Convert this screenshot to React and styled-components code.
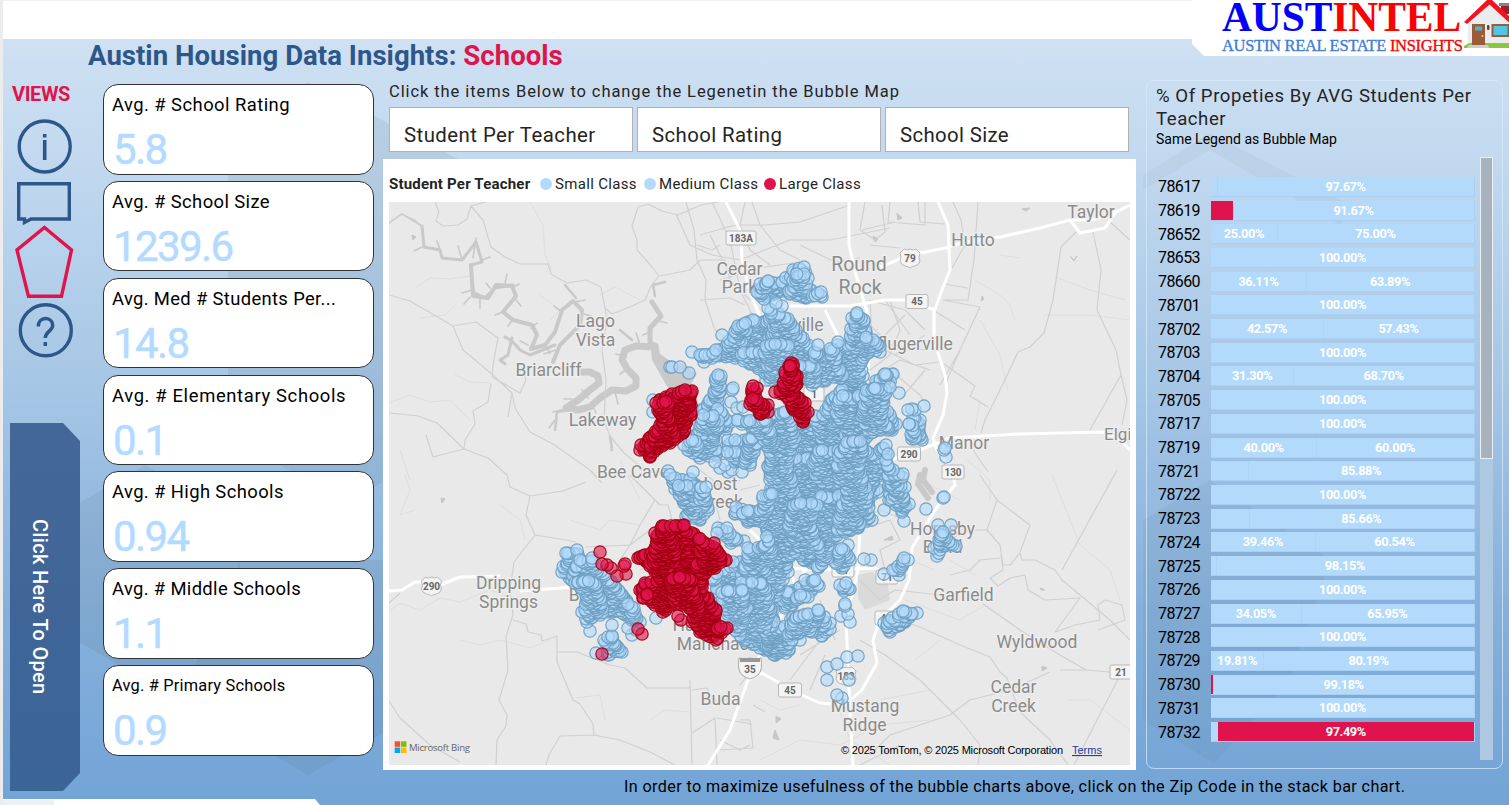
import React from "react";
import styled, { createGlobalStyle } from "styled-components";

const Global = createGlobalStyle`
  body { margin: 0; overflow: hidden; background: #eeeeee; }
  * { box-sizing: border-box; }
`;

const navy = "#2d5689";
const crimson = "#e0144c";
const sky = "#b3daff";

const Page = styled.div`
  position: relative;
  width: 1509px;
  height: 805px;
  padding-left: 3px;
  overflow: hidden;
  background: linear-gradient(180deg, #cfe1f3 39px, #bfd7ee 180px, #a4c5e5 400px, #86b0db 610px, #72a4d6 805px);
  font-family: Roboto, "Liberation Sans", sans-serif;
  display: flex;
  flex-direction: column;
  box-shadow: inset 3px 0 0 #ececec;
`;

const Backdrop = styled.svg`
  position: absolute;
  left: 0;
  top: 0;
`;

const TopBar = styled.div`
  position: relative;
  height: 39px;
  flex: none;
  background: #fff;
  border-top: 1px solid #f0f0f0;
`;

const Title = styled.h1`
  position: relative;
  margin: 0;
  height: 41px;
  flex: none;
  padding-left: 85px;
  line-height: 33px;
  font-size: 27.5px;
  font-weight: 700;
  letter-spacing: ${(p) => p.$ls}px;
  color: ${navy};
  white-space: nowrap;
`;

const Accent = styled.span`
  color: ${crimson};
`;

const Brand = styled.div`
  position: absolute;
  right: 0;
  top: 0;
  width: 317px;
  height: 56px;
  display: flex;
  background: #fff;
  clip-path: polygon(0 0, 100% 0, 100% 100%, 12px 100%, 0 44px);
  padding-left: 30px;
`;

const BrandText = styled.div`
  width: 242px;
  font-family: "Liberation Serif", serif;
  white-space: nowrap;
`;

const BrandName = styled.div`
  height: 36px;
  line-height: 35px;
  font-size: 41.5px;
  font-weight: 700;
  color: #0202fb;
  letter-spacing: ${(p) => p.$ls}px;
`;

const BrandTag = styled.div`
  line-height: 20px;
  font-size: 16.5px;
  color: #3f7dd8;
  letter-spacing: ${(p) => p.$ls}px;
  -webkit-text-stroke: 0.35px currentColor;
`;

const Red = styled.span`
  color: #fb0202;
`;

const Columns = styled.div`
  position: relative;
  display: flex;
  height: 690px;
  flex: none;
`;

const Nav = styled.nav`
  width: 100px;
  padding-left: 7px;
  display: flex;
  flex-direction: column;
  align-items: flex-start;
`;

const NavTitle = styled.div`
  height: 39px;
  flex: none;
  padding-left: 2px;
  line-height: 28px;
  font-size: 20px;
  font-weight: 700;
  letter-spacing: ${(p) => p.$ls}px;
  color: ${crimson};
`;

const NavIcons = styled.svg`
  display: block;
  flex: none;
`;

const OpenPanel = styled.button`
  border: 0;
  margin: 62px 0 0;
  width: 70px;
  height: 368px;
  flex: none;
  padding: 0 11px 0 0;
  display: flex;
  align-items: center;
  justify-content: center;
  background: linear-gradient(#446798, #3b6497);
  clip-path: polygon(0 0, 53px 0, 100% 18px, 100% 350px, 53px 100%, 0 100%);
  color: #fff;
  font: 500 20px Roboto, sans-serif;
  letter-spacing: ${(p) => p.$ls}px;
  writing-mode: vertical-rl;
`;

const Cards = styled.div`
  width: 271px;
  padding-top: 4px;
  display: flex;
  flex-direction: column;
  gap: 6.35px;
`;

const Card = styled.div`
  height: 90.5px;
  flex: none;
  padding: 8px 8px 0;
  border: 1.4px solid #333;
  border-radius: 15px;
  background: #fff;
`;

const CardTitle = styled.div`
  height: 24px;
  line-height: 24px;
  font-size: ${(p) => (p.$small ? 16.4 : 18.4)}px;
  letter-spacing: ${(p) => p.$ls}px;
  color: #000;
  white-space: nowrap;
`;

const CardValue = styled.div`
  padding-left: 1px;
  line-height: 66px;
  font-size: 42px;
  letter-spacing: -1.6px;
  color: ${sky};
  -webkit-text-stroke: 0.5px ${sky};
`;

const Middle = styled.main`
  width: 753px;
  margin-left: 9px;
  display: flex;
  flex-direction: column;
`;

const Hint = styled.div`
  height: 27px;
  padding-left: 6px;
  line-height: 23px;
  font-size: 16.5px;
  letter-spacing: ${(p) => p.$ls}px;
  color: #252423;
  white-space: nowrap;
`;

const Tabs = styled.div`
  height: 45px;
  padding: 0 7px 0 6px;
  display: grid;
  grid-template-columns: repeat(3, 1fr);
  gap: 4px;
`;

const Tab = styled.button`
  border: 1px solid #b3b0ad;
  background: #fff;
  padding: 10px 0 0 14px;
  text-align: left;
  font: 400 20.4px Roboto, sans-serif;
  letter-spacing: ${(p) => p.$ls}px;
  color: #252423;
`;

const MapCard = styled.section`
  margin-top: 7px;
  height: 611px;
  background: #fff;
  padding: 0 6px;
`;

const Legend = styled.div`
  height: 43px;
  padding-top: 7px;
  display: flex;
  align-items: center;
  font-size: 15px;
  letter-spacing: ${(p) => p.$ls}px;
  color: #252423;
  white-space: nowrap;
`;

const LegendTitle = styled.b`
  width: 151px;
  letter-spacing: 0.2px;
`;

const LegendItem = styled.span`
  width: ${(p) => p.$w}px;
  display: flex;
  align-items: center;
  gap: 3px;
  &::before {
    content: "";
    width: 12px;
    height: 12px;
    border-radius: 50%;
    background: ${(p) => p.$c};
  }
`;

const MapSvg = styled.svg`
  display: block;
`;

const Chart = styled.section`
  margin-left: 10px;
  width: 357px;
  height: 689px;
  border: 1.5px solid rgba(214, 233, 250, 0.75);
  border-radius: 8px;
  padding: 4px 8px 0 9px;
`;

const ChartTitle = styled.h2`
  margin: 0;
  font-size: 18.6px;
  font-weight: 400;
  line-height: 23px;
  letter-spacing: ${(p) => p.$ls}px;
  color: #252423;
  white-space: nowrap;
`;

const ChartSub = styled.div`
  line-height: 17px;
  height: 19px;
  font-size: 14px;
  letter-spacing: ${(p) => p.$ls}px;
  color: #000;
`;

const Plot = styled.div`
  margin-top: 7px;
  display: flex;
  justify-content: space-between;
`;

const Rows = styled.div`
  padding-top: 18px;
  width: 319px;
`;

const Row = styled.div`
  height: 23.71px;
  display: flex;
  align-items: center;
`;

const Zip = styled.div`
  width: 55px;
  padding-left: 2px;
  font-size: 16px;
  letter-spacing: -0.6px;
  color: #000;
`;

const Bar = styled.div`
  display: flex;
  width: 264px;
  height: 20px;
  border-right: 1px solid #a9d0f4;
  border-bottom: 1px solid #a9d0f4;
`;

const Segment = styled.div`
  flex: none;
  background: ${(p) => (p.$red ? crimson : "#b3dafb")};
  box-shadow: ${(p) => (p.$divided ? "inset 1px 0 0 #acd4f7" : "none")};
  color: #fff;
  font-size: 12.8px;
  font-weight: 700;
  letter-spacing: -0.4px;
  line-height: 20px;
  text-align: center;
  overflow: hidden;
`;

const Track = styled.div`
  margin-right: 1px;
  width: 13px;
  height: 603px;
  background: #afc8e2;
`;

const Thumb = styled.div`
  height: 302px;
  background: #a7b2bd;
  border: 1px solid #e8f1fa;
`;

const Footer = styled.div`
  position: relative;
  padding: 7px 0 0 621px;
  line-height: 20px;
  font-size: 16.2px;
  letter-spacing: ${(p) => p.$ls}px;
  color: #000;
  white-space: nowrap;
`;

const cards = [
  ["Avg. # School Rating", "5.8", 0.45],
  ["Avg. # School Size", "1239.6", 0.4],
  ["Avg. Med # Students Per...", "14.8", 0.35],
  ["Avg. # Elementary Schools", "0.1", 0.65],
  ["Avg. # High Schools", "0.94", 0.4],
  ["Avg. # Middle Schools", "1.1", 0.35],
  ["Avg. # Primary Schools", "0.9", 0.2],
];

const rows = [
  ["78617", [2.33, 97.67]],
  ["78619", [8.33, 91.67], 0],
  ["78652", [25, 75]],
  ["78653", [100]],
  ["78660", [36.11, 63.89]],
  ["78701", [100]],
  ["78702", [42.57, 57.43]],
  ["78703", [100]],
  ["78704", [31.3, 68.7]],
  ["78705", [100]],
  ["78717", [100]],
  ["78719", [40, 60]],
  ["78721", [14.12, 85.88]],
  ["78722", [100]],
  ["78723", [14.34, 85.66]],
  ["78724", [39.46, 60.54]],
  ["78725", [1.85, 98.15]],
  ["78726", [100]],
  ["78727", [34.05, 65.95]],
  ["78728", [100]],
  ["78729", [19.81, 80.19]],
  ["78730", [0.82, 99.18], 0],
  ["78731", [100]],
  ["78732", [2.51, 97.49], 1],
];

/* ---------- bubble layer ---------- */
const blueAreas = [
  [757,292,760,284,768,281,782,282,793,270,804,267,808,278,806,288,821,292,822,297,806,298,790,294,782,291,772,295,764,299],
  [738,326,753,320,765,322,771,310,779,314,788,319,796,330,803,338,806,346,818,354,838,345,848,345,852,318,857,313,864,320,866,332,873,340,880,346,880,352,868,353,862,360,863,376,855,386,840,378,825,381,812,385,805,378,770,380,764,372,750,364,735,358,712,358,704,362,700,355,716,350,730,340],
  [716,378,721,376,720,392,718,402,723,415,731,422,726,429,717,428,716,440,716,455,700,458,688,450,684,445,696,435,700,425,702,410,710,400],
  [728,440,735,440,752,438,758,444,754,452,750,465,735,462,727,452],
  [738,420,765,420,772,414,785,412,800,424,815,416,826,410,831,400,840,392,846,380,858,378,864,390,872,390,876,381,885,374,893,374,890,387,883,400,890,415,896,424,892,430,880,430,868,435,864,440,862,448,874,455,886,460,890,470,874,480,878,492,868,500,872,520,858,528,845,532,830,540,828,558,818,568,804,560,795,552,786,560,788,572,780,585,776,596,772,612,778,634,775,640,775,655,760,648,745,641,730,625,722,608,717,592,712,578,718,572,740,562,750,550,764,546,768,532,762,522,748,522,735,514,736,507,750,511,760,510,763,496,771,488,768,466,770,452,764,440,752,428],
  [668,471,675,478,690,479,698,487,706,487,708,510,700,520,686,516,683,500,675,489],
  [718,528,727,528,737,540,731,543,717,533],
  [782,600,787,592,800,587,805,580,815,580,819,586,808,597,792,605,785,608],
  [770,630,780,628,793,617,808,614,818,610,830,623,830,629,822,636,812,632,796,634,789,650,775,655,765,650],
  [838,550,848,545,850,560,842,568,835,562],
  [840,585,846,583,850,589,844,591],
  [893,570,904,558,908,560,899,575],
  [884,623,892,618,903,611,917,613,905,622,890,632],
  [909,424,913,418,920,420,922,440,912,439],
  [880,450,886,445,888,454,882,453],
  [934,548,943,532,956,546,945,546,937,556],
  [888,475,903,474,902,493,909,504,902,512,896,505,889,500],
  [566,553,577,550,580,560,592,558,605,575,612,582,622,595,634,608,640,622,632,620,624,614,612,612,600,615,587,622,582,612,586,595,575,583,562,572],
  [604,640,612,636,622,652,608,655],
];
const blueDots = [782,306,768,308,776,303,692,352,672,367,680,367,689,373,670,367,722,335,733,388,732,390,731,402,737,408,743,407,737,420,742,424,748,423,766,380,718,375,717,385,715,462,725,465,720,468,728,472,693,472,753,512,748,548,744,541,756,556,733,562,845,606,850,622,848,614,845,604,864,559,871,560,884,574,926,509,943,498,944,497,904,521,884,510,938,525,951,525,941,535,899,393,908,410,915,410,924,406,912,409,945,448,946,457,944,450,827,667,837,664,847,657,858,656,827,680,849,680,837,695,842,698,590,631,612,625,632,635,636,630,628,628,608,637,615,645,620,651,596,653,786,653,800,640,771,619,653,400,653,412,656,618,818,345,808,345,838,342,865,510,893,470,905,487,778,546,790,540,841,616,902,506,732,470,742,472];
const redAreas = [
  [656,403,660,400,672,394,685,390,692,391,691,405,691,415,683,433,670,443,662,446,650,457,640,450,641,445,652,436,660,425,658,410],
  [752,389,757,388,757,400,768,405,768,412,760,414,750,404],
  [789,366,793,364,797,376,797,384,793,390,805,403,808,412,803,422,794,410,786,396,775,392,783,386,785,372],
  [655,533,662,526,684,525,694,534,708,545,714,543,718,553,726,560,715,568,703,575,702,588,708,598,716,610,716,625,727,628,716,640,700,632,692,622,692,610,676,604,663,612,655,605,643,598,640,590,645,583,660,578,650,566,638,558,645,555,655,548],
];
const redDots = [600,552,602,564,607,565,611,568,617,576,626,574,625,564,624,566,638,629,642,634,602,654,640,557,678,616,681,620,664,526,683,526,791,363,660,400,753,386];

function rng(seed) {
  let s = seed;
  return () => {
    s = (s * 1664525 + 1013904223) % 4294967296;
    return s / 4294967296;
  };
}

function inside(x, y, a) {
  let hit = false;
  for (let i = 0, j = a.length - 2; i < a.length; j = i, i += 2) {
    if (a[i + 1] > y !== a[j + 1] > y && x < ((a[j] - a[i]) * (y - a[i + 1])) / (a[j + 1] - a[i + 1]) + a[i]) hit = !hit;
  }
  return hit;
}

/* Neighbourhood stacks: later stacks lie on earlier ones, each drawn from south to north. */
function stackOrder(x, y) {
  const col = Math.floor((x + 4 * Math.sin(y / 9)) / 24);
  const row = Math.floor((y + ((col * 37) % 29)) / 46);
  return ((((col * 73) ^ (row * 151)) >>> 0) % 97) * 1000;
}

function scatter(areas, dots, stepX, stepY, seed) {
  const rand = rng(seed);
  const out = [];
  areas.forEach((a) => {
    const xs = a.filter((_, i) => i % 2 === 0);
    const ys = a.filter((_, i) => i % 2 === 1);
    for (let x = Math.min(...xs); x <= Math.max(...xs); x += stepX) {
      for (let y = Math.min(...ys); y <= Math.max(...ys); y += stepY) {
        const px = x + (rand() - 0.5) * stepX * 0.9;
        const py = y + (rand() - 0.5) * stepY * 1.3;
        if (inside(px, py, a)) out.push([px, py]);
      }
    }
    for (let i = 0; i < a.length; i += 2) out.push([a[i], a[i + 1]]);
  });
  for (let i = 0; i < dots.length; i += 2) out.push([dots[i], dots[i + 1]]);
  return out
    .map(([x, y]) => [x, y, stackOrder(x, y) - y])
    .sort((p, q) => p[2] - q[2]);
}

const blue = scatter(blueAreas, blueDots, 5, 2.2, 7);
const red = scatter(redAreas, redDots, 4.6, 1.9, 11);

/* ---------- base map ---------- */
const minor = [
  "M389 223L401 214 415 220 424 229M435 202L439 212 436 221 443 226 458 225 467 219 471 206 486 202M471 206L483 220 488 237 491 247 505 257 520 264 536 264 548 264 551 274 567 283 586 280 601 287 605 308 612 314 632 306 645 300 651 286 659 276 653 268 637 250 637 240 632 226 638 207 648 204 662 211 678 215 701 205 719 202",
  "M389 295L410 301 453 326 476 322 498 338 493 365 492 377 520 393 526 380 522 370M453 326L463 350 493 375 512 393 515 408 530 432 553 444 590 470 602 483M512 393L508 417M389 413L418 416 437 423 464 449 488 458 507 475 510 487 530 496 563 491 586 482M530 496L526 515 535 535 560 539 576 542M535 535L514 562 510 590 513 615 506 636 508 670 499 700 507 715 506 726 497 740 496 765",
  "M491 383L488 402 473 411 475 424 465 440 464 449 433 457 426 435M605 308L607 320 602 350 606 380 604 420 610 436 624 453 645 470",
  "M513 620L526 624 528 632 541 635 542 641 557 636 557 662 573 700 580 704 593 724 594 735M546 765L549 755 560 736 594 735 620 740 650 752 675 765M557 652L577 652 610 665 625 668 647 688 690 688M389 701L400 718 430 745 460 762",
  "M676 214L690 245 712 255 740 260 790 240 830 240 890 228M686 202L694 230 697 260 706 280 705 300 715 330 745 350M712 202L730 240 740 290 760 330M752 202L760 225 780 250 800 260M700 235L735 225 765 225 800 222 850 205M697 245L712 250 720 245M700 260L725 260 730 280 750 300M745 202L740 225 750 250 770 265",
  "M660 276L690 270 700 260M710 235L725 265M720 280L760 268 800 262M700 300L730 298 745 305M800 245L835 262 860 258M865 202L860 230 875 240 885 232 882 205M890 202L888 222 925 225 925 202M862 230L895 222M870 245L900 248M918 202L920 222 945 224M953 202L961 220 965 245 952 268M978 202L974 260 968 300 945 300M944 284L968 288M943 300L980 307 960 350 945 385M933 310L965 330",
  "M868 300L905 310 925 330M870 325L890 345 925 350M890 300L900 330 890 355 870 370M905 315L875 345M860 385L900 360 930 370M885 350L915 365 940 362M925 370L900 400M890 370L920 395 930 410M870 300L872 340M895 355L925 335M944 364L975 386 970 396 988 407M960 350L940 385M885 300L910 335",
  "M1076 232L1061 247 1053 300 1044 333 1030 347 1018 352 1000 390 985 420 981 433M1093 232L1101 270 1097 310 1116 350 1121 375 1127 400 1122 425M1121 375L1090 430M1110 222L1130 240M973 450L988 472",
  "M630 475L655 500 660 505 668 505 672 520M655 500L640 525 630 545 620 560M650 530L630 545 585 547M690 680L692 765M692 690L707 688 712 700 740 700M692 733L715 718 717 765M717 718L752 724M720 740L740 750 750 745M740 720L750 720 753 748 720 750M692 650L700 640 720 645",
  "M753 705L765 712M760 660L740 685M800 640L830 620M800 655L840 630M820 600L835 640M790 680L820 640M810 690L825 655M860 530L890 520 900 540 880 550 885 570M860 520L880 510 905 520M860 580L880 600 895 590 940 595M860 640L885 655 920 680 960 720 980 745 978 765",
  "M885 615L920 627 960 645 990 657 1000 672 1007 678 1020 712 1050 740 1068 765M983 604L1020 630 1060 655 1086 670 1110 672M1050 672L1010 690 970 700 950 715 890 735 870 755M1060 670L1085 670M1122 672L1098 718 1074 765M980 475L997 500 987 530 1000 545 1003 565 1010 565 1020 553 1022 560 1035 560 1055 570 1062 580 1080 595 1110 620 1130 640",
  "M997 500L1030 525 1020 552M1117 470L1062 570M987 530L960 530 950 545M950 575L970 570 980 560 1000 558M640 600L620 610 585 612M389 603L400 593M700 470L725 490 740 480M740 490L760 485M715 500L720 520M640 570L660 560",
  "M1098 630L1125 620 1122 605 1105 600 1098 605 1100 620 1075 625 1055 632 1080 598 1045 600 1028 590 1025 575 1010 578 998 586 990 578 1003 570 1001 555M860 765L900 745",
];
const faint = [
  "M415 288L430 278 450 279 470 276M420 318L445 315 455 305M530 202L543 225 545 255 552 270M455 375L470 382 490 383M389 403L410 395 430 402 450 400 470 420M600 295L615 287 640 300M389 611L400 603 420 610 440 598 460 602 490 590 512 598M460 640L480 645 500 640 530 648 550 640M415 510L400 515 410 490 405 475M500 505L520 520 525 540M570 520L600 530 610 520 640 525M570 545L590 570 580 600M575 698L600 695 605 720",
  "M975 280L1000 295 1010 305 1015 320M980 320L1000 355 1008 390M1055 277L1090 290 1125 300M1044 315L1090 315 1130 320M1000 255L1020 258M1052 475L1070 520 1080 545 1110 570 1120 600M967 460L990 480 990 500M905 600L960 620 985 605M950 560L975 575M1068 700L1090 700 1130 730M910 560L935 570M980 400L975 430M895 420L930 440",
  "M650 720L665 710 690 712M760 700L780 710 800 705M800 600L810 620M880 700L930 690M920 480L960 500M400 450L410 480M540 295L560 310 550 320M620 460L640 500M940 640L915 660M760 760L800 740 840 745 880 725 930 720M832 690L850 740 890 765",
];
const highways = [
  "M726 202L741 232 742 260 748 285 755 305 762 320",
  "M849 202L849 245 856 275 868 315 872 345 866 380",
  "M777 306L830 306 850 306 885 300 905 300 935 310",
  "M1130 205L1110 215 1090 220 1070 220 1040 228 1000 237 965 242 945 248 910 255 880 267M1070 220L1080 233 1105 228 1115 213",
  "M938 202L948 225 950 270 942 290 934 312 934 340 945 375 947 393 943 415 933 438 937 450 952 470 955 485 935 510 912 548 909 580 900 600 880 620 873 640 877 663 862 690 845 705 820 703 795 692 762 673 748 680",
  "M1130 450L1120 440 1103 432 1020 434 950 438 920 450 890 460 860 465 820 500",
  "M389 591L402 590 415 582 425 582M440 585L460 577 500 576M520 591L575 587",
  "M708 765L730 730 748 680 760 655 790 600 820 540",
  "M853 765L850 710 846 620 858 570 860 530",
  "M790 568L820 570 875 568 900 583",
  "M825 310L845 350 848 400M750 530L790 570 800 600",
];
const river = [
  ["M389 223L402 214 422 226", 1.5],
  ["M422 226L424 247 440 250 442 258 462 260 476 242 482 262 471 265 473 292 485 298 495 288 513 285", 3],
  ["M471 265L473 296 488 298 496 285 512 286 516 296 503 312 513 320 532 325 537 335 531 349 545 345 555 332 562 310 573 301 582 310 580 325 560 345 553 362", 4],
  ["M505 337L512 341 520 350 530 355 555 345M512 338L508 355 500 360 505 364", 3],
  ["M652 302L661 316 650 328 650 345", 5],
  ["M655 347L636 346 625 350 622 360 628 370 636 378 636 386 626 391 612 390 600 398 590 407 578 410 566 408 578 400 590 390 599 383 598 376 590 372 582 372", 7],
  ["M655 296L653 285 665 282M565 285L576 298M570 410L557 412 555 430M620 330L632 340", 2.5],
  ["M925 470L923 480 932 492M920 475L918 484 928 498", 6],
  ["M610 436L612 450M664 410L652 430 648 450", 2.5],
];
const spurs = "M422 247l-8 4M473 258l3 -20M482 260l8 -3M462 260l-4 -14M440 250l-3 -9M472 290l-10 3M470 297l-6 7M480 298l0 10M490 288l-4 -5M505 283l2 -9M512 288l7 -4M516 300l5 6M503 312l-8 3M512 320l-4 6M531 328l6 -5M528 345l-8 -4M545 345l5 8M562 312l-8 -6M575 302l10 -2M584 314l7 2M556 350l-12 4M640 345l-4 -12M626 356l-10 -2M628 368l-8 6M615 392l3 12M592 404l4 9M565 409l-12 3M555 420l-6 8M588 398l-6 -8M655 320l12 3M652 331l-9 4M572 399l-8 0";

const places = [
  ["Taylor", 1091, 218], ["Hutto", 973, 246], ["Cedar", 739.5, 274.5], ["Park", 739.5, 293], ["Round", 859, 271, 19.5], ["Rock", 860, 294, 19.5],
  ["Pflugerville", 909.5, 350], ["Jollyville", 790, 331], ["Lago", 595.5, 326.5], ["Vista", 595.5, 345.5], ["Briarcliff", 548.5, 376], ["Lakeway", 602.5, 426], ["Bee Cave", 633, 477.5],
  ["Manor", 964, 449], ["Elgin", 1122.5, 440, 17], ["Lost", 720.5, 489.5], ["Creek", 720.5, 508], ["Hornsby", 942.5, 534.5], ["Bend", 942.5, 553], ["Garfield", 963.5, 600.5],
  ["Dripping", 508.5, 589], ["Springs", 508.5, 608], ["Wyldwood", 1037, 648], ["Cedar", 1013.5, 693], ["Creek", 1013.5, 711.5], ["Buda", 720.5, 704.5],
  ["Mustang", 865, 712], ["Ridge", 864.5, 730.5], ["Belterra", 599, 600.5], ["Hays", 692, 631], ["Manchaca", 717.5, 650],
];
const shields = [["183A", 741, 238, 30], ["45", 917, 301.5, 22], ["290", 909, 454, 23], ["130", 953, 472, 22], ["71", 887, 577, 22], ["45", 886, 618, 22], ["45", 790, 690, 23], ["21", 1121, 672, 22], ["1", 814, 394, 20], ["71", 843, 570, 22]];

function MapView() {
  return (
    <MapSvg width="741" height="563" viewBox="389 202 741 563">
      <rect x="389" y="202" width="741" height="563" fill="#e9e9e9" />
      <path d="M858 575L872 572 888 585 890 600 865 610 858 598Z" fill="#dadada" />
      <g fill="none" stroke="#dedede" strokeWidth="1">{faint.map((d, i) => <path key={i} d={d} />)}</g>
      <g fill="none" stroke="#c9c9c9" strokeLinejoin="round" strokeLinecap="round">
        {river.map(([d, w], i) => <path key={i} d={d} strokeWidth={w} />)}
        <path d={spurs} strokeWidth="1.6" />
      </g>
      <path d="M650 340L658 344 660 354 670 361 684 364 697 374 690 386 678 392 668 388 660 374 652 360Z" fill="#c9c9c9" />
      <path d="M412 235l4 2-3 3ZM441 498l4 1-3 4ZM1022 209l8 -1-4 3ZM1070 256l4 4 3-4-3 5ZM897 213l5 5-4 2ZM873 236l5 3-3 3ZM982 296l2 3-3 2ZM1040 588l5 2-4 0ZM1042 666l5 2-5 3ZM776 716l5 3-5 4ZM775 730l4 10-6-2ZM884 540l8 -4 1 4Z" fill="#c6c6c6" stroke="#c6c6c6" />
      <g fill="none" stroke="#d0d0d0" strokeWidth="1.2" strokeLinejoin="round">{minor.map((d, i) => <path key={i} d={d} />)}</g>
      <g fill="none" stroke="#fff" strokeWidth="3" strokeLinejoin="round">{highways.map((d, i) => <path key={i} d={d} />)}</g>
      <g fontFamily="Roboto, sans-serif" fill="#8b8b8b" textAnchor="middle" stroke="#eeeeee" strokeWidth="2.5" paintOrder="stroke">
        {places.map(([t, x, y, s], i) => <text key={i} x={x} y={y} fontSize={s || 17.5}>{t}</text>)}
      </g>
      <g fontFamily="Roboto, sans-serif" fontWeight="700" fontSize="10" textAnchor="middle" fill="#666">
        {shields.map(([t, x, y, w], i) => (
          <g key={i}>
            <rect x={x - w / 2} y={y - 7} width={w} height="14" rx="2" fill="#f4f4f4" stroke="#b8b8b8" />
            <text x={x} y={y + 3.6}>{t}</text>
          </g>
        ))}
        {[["79", 910, 258], ["290", 431.5, 586], ["183", 846, 676]].map(([t, x, y]) => (
          <g key={t}>
            <path d={`M${x - 6} ${y - 9}q3 2 6 0q3 2 6 0l4 4q-2 4 0 8q-1 4 -5 5q-3 0 -5 2q-2 -2 -5 -2q-4 -1 -5 -5q2 -4 0 -8Z`} fill="#f4f4f4" stroke="#b8b8b8" />
            <text x={x} y={y + 3.6}>{t}</text>
          </g>
        ))}
        <path d="M739 658q5 2 11 0q6 2 11 0q2 12 -3 17q-4 3 -8 4q-4 -1 -8 -4q-5 -5 -3 -17Z" fill="#f4f4f4" stroke="#a8a8a8" />
        <path d="M740 658h20v4h-20Z" fill="#999" />
        <text x="750" y="673">35</text>
      </g>
      <g fill="#b3dafb" fillOpacity="0.6" stroke="#6d9dc0" strokeOpacity="0.9" strokeWidth="1.2">
        {blue.map(([x, y], i) => <circle key={i} cx={x} cy={y} r="6.2" />)}
      </g>
      <g fill="#e0144c" fillOpacity="0.6" stroke="#a0000f" strokeOpacity="0.9" strokeWidth="1.2">
        {red.map(([x, y], i) => <circle key={i} cx={x} cy={y} r="6.2" />)}
      </g>
      <g>
        <rect x="394.7" y="741.3" width="5.5" height="5.5" fill="#f35325" />
        <rect x="401" y="741.3" width="5.5" height="5.5" fill="#81bc06" />
        <rect x="394.7" y="747.5" width="5.5" height="5.5" fill="#05a6f0" />
        <rect x="401" y="747.5" width="5.5" height="5.5" fill="#ffba08" />
        <text x="409" y="751" fontFamily="Open Sans, sans-serif" fontSize="9.6" fill="#666" textLength="61">Microsoft Bing</text>
      </g>
      <g fontFamily="Liberation Sans, sans-serif" fontSize="11">
        <text x="841" y="754" fill="#000" textLength="222">© 2025 TomTom, © 2025 Microsoft Corporation</text>
        <text x="1072" y="754" fill="#1f3aa0" textDecoration="underline">Terms</text>
      </g>
    </MapSvg>
  );
}

function House() {
  return (
    <svg width="45" height="50" viewBox="1464 0 45 50">
      <path d="M1468 22L1489 3 1509 21V44H1468Z" fill="#e9edf0" />
      <rect x="1501" y="4" width="8" height="10" fill="#a01f26" />
      <rect x="1499" y="3" width="10" height="3" fill="#7b878d" />
      <path d="M1464 46q6 -5 12 -3h33v5h-45Z" fill="#8cc63f" />
      <path d="M1464 22L1487 0h5l17 16v6.500L1489.500 4.500 1467 24Z" fill="#f2141c" />
      <rect x="1472" y="24" width="13" height="21" fill="#9a5b3a" />
      <rect x="1475" y="26.500" width="7" height="4" fill="#49b7cf" />
      <circle cx="1482.500" cy="36" r="1" fill="#f3d36b" />
      <path d="M1469 45h19l1 3h-22Z" fill="#c8ced2" />
      <rect x="1487" y="25" width="2.5" height="5" rx="1" fill="#5b4630" />
      <rect x="1491.500" y="24" width="17.500" height="13" fill="#9a5b3a" />
      <rect x="1493.500" y="26" width="14" height="9" fill="#4fc7e3" />
    </svg>
  );
}

export default function App() {
  return (
    <Page>
      <Global />
      <Backdrop width="1509" height="805">
        <g fill="#4b5f70" fillOpacity="0.1">
          <path d="M228 120L308 82 460 160V440L350 500 228 440Z" />
          <path d="M50 520L145 465 240 520V690L200 712 50 625Z" />
          <path d="M180 700L308 775 460 690V560H240Z" />
          <path d="M1143 175L1210 133 1350 205 1340 225 1210 150 1143 190Z" fillOpacity="0.05" />
          <path d="M1143 520L1210 480 1330 560 1290 680 1214 763 1143 720Z" fillOpacity="0.07" />
        </g>
        <path d="M3 799H315L320 805H3Z" fill="#fff" />
        <path d="M3 800H54V805H3Z" fill="#edf1f4" />
      </Backdrop>
      <TopBar />
      <Brand>
        <BrandText>
          <BrandName $ls={-0.1}>AUST<Red>INTEL</Red></BrandName>
          <BrandTag $ls={-0.3}>AUSTIN REAL ESTATE <Red>INSIGHTS</Red></BrandTag>
        </BrandText>
        <House />
      </Brand>
      <Title $ls={0.05}>Austin Housing Data Insights: <Accent>Schools</Accent></Title>
      <Columns>
        <Nav>
          <NavTitle $ls={-0.4}>VIEWS</NavTitle>
          <NavIcons width="70" height="242" viewBox="10 119 70 242" fill="none" stroke={navy} strokeWidth="3.4">
            <circle cx="44.7" cy="146.5" r="25.5" />
            <path d="M44.7 140V160M44.7 134V137.5" strokeWidth="3.6" />
            <path d="M18.7 183.7H69.3V219H31L24.5 222.5V219H18.7Z" />
            <path d="M44.5 227.5L71.5 250 61.5 296.3H28.5L17 250Z" stroke={crimson} />
            <circle cx="45.8" cy="330.3" r="25.5" />
            <path d="M38.3 326.5c0-5 3-8 7.2-8s7.2 3 7.2 7c0 5-7.4 6.500-7.400 12.500M45.300 342V346" strokeWidth="3.5" />
          </NavIcons>
          <OpenPanel $ls={0.3}>Click Here To Open</OpenPanel>
        </Nav>
        <Cards>
          {cards.map(([t, v, ls], i) => (
            <Card key={t}>
              <CardTitle $small={i === 6} $ls={ls}>{t}</CardTitle>
              <CardValue>{v}</CardValue>
            </Card>
          ))}
        </Cards>
        <Middle>
          <Hint $ls={0.91}>Click the items Below to change the Legenetin the Bubble Map</Hint>
          <Tabs>
            <Tab $ls={0.45}>Student Per Teacher</Tab>
            <Tab $ls={0.38}>School Rating</Tab>
            <Tab $ls={0.35}>School Size</Tab>
          </Tabs>
          <MapCard>
            <Legend $ls={0.33}>
              <LegendTitle>Student Per Teacher</LegendTitle>
              <LegendItem $w={104} $c={sky}>Small Class</LegendItem>
              <LegendItem $w={120} $c={sky}>Medium Class</LegendItem>
              <LegendItem $w={110} $c={crimson}>Large Class</LegendItem>
            </Legend>
            <MapView />
          </MapCard>
        </Middle>
        <Chart>
          <ChartTitle $ls={0.55}>% Of Propeties By AVG Students Per<br />Teacher</ChartTitle>
          <ChartSub $ls={0}>Same Legend as Bubble Map</ChartSub>
          <Plot>
            <Rows>
              {rows.map(([zip, parts, redAt]) => (
                <Row key={zip}>
                  <Zip>{zip}</Zip>
                  <Bar>
                    {parts.map((v, i) => (
                      <Segment key={i} $red={redAt === i} $divided={i > 0 && redAt === undefined} style={{ width: `${v}%` }}>
                        {v > 15 ? `${v.toFixed(2)}%` : ""}
                      </Segment>
                    ))}
                  </Bar>
                </Row>
              ))}
            </Rows>
            <Track><Thumb /></Track>
          </Plot>
        </Chart>
      </Columns>
      <Footer $ls={0.37}>In order to maximize usefulness of the bubble charts above, click on the Zip Code in the stack bar chart.</Footer>
    </Page>
  );
}
